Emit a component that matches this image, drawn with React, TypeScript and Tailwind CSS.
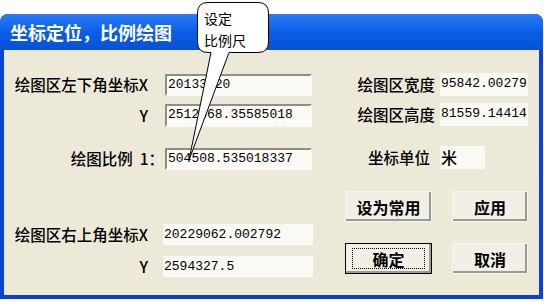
const cjk = { fontFamily: '"Noto Sans CJK SC", "Noto Sans", sans-serif' };
const mono = { fontFamily: '"Liberation Mono", "Noto Sans CJK SC", monospace' };

function Input({ value }: { value: string }) {
  return (
    <div
      className="h-full w-[147px] border-2 border-t-[#8f8d86] border-l-[#8f8d86] border-b-[#fbfaf5] border-r-[#fbfaf5] bg-[#fbfaf6] pl-[1px] text-[13px] leading-[18px] text-black"
      style={mono}
    >
      {value}
    </div>
  );
}

function Field({ value, w }: { value: string; w: string }) {
  return (
    <div className={`h-full ${w} bg-[#faf9f4] pl-[1px] text-[13px] leading-[22px] text-black`} style={mono}>
      {value}
    </div>
  );
}

function Button({ label, wide, focus }: { label: string; wide?: boolean; focus?: boolean }) {
  return (
    <div
      className={`flex h-[31px] items-center justify-center ${wide ? "w-[87px]" : "w-[76px]"} ${
        focus ? "border border-black" : "border border-[#f6f5f0]"
      } bg-[#f1efe6] shadow-[inset_-2px_-2px_0_#9d9a8e]`}
    >
      <div
        className={`flex h-[21px] items-center justify-center px-2 text-[16px] font-semibold text-black ${
          focus ? "w-[73px] border border-dotted border-black" : ""
        }`}
        style={cjk}
      >
        {label}
      </div>
    </div>
  );
}

export default function App() {
  return (
    <div className="relative h-[302px] w-[544px] overflow-hidden bg-white">
      <div className="absolute left-0 top-[14px] flex h-[285px] w-[543px] flex-col rounded-t-[8px] bg-[#0842d6]">
        <div
          className="flex h-[36px] items-center rounded-t-[8px] bg-gradient-to-b from-[#2a7cf8] via-[#0a5ee6] to-[#0651d8] pl-[10px] text-[18px] font-bold text-white"
          style={cjk}
        >
          坐标定位，比例绘图
        </div>
        <div className="mx-[4px] mb-[4px] flex flex-1 bg-[#ece9d8]">
          {/* left column */}
          <div className="flex w-[326px] flex-col pt-[24px] text-[15.5px] font-medium text-black" style={cjk}>
            <div className="flex h-[22px] items-center">
              <div className="w-[146px] pr-[2px] text-right whitespace-nowrap">绘图区左下角坐标X</div>
              <div className="ml-[15px] h-full">
                <Input value="20133420" />
              </div>
            </div>
            <div className="mt-[8px] flex h-[23px] items-center">
              <div className="w-[146px] pr-[2px] text-right">Y</div>
              <div className="ml-[15px] h-full">
                <Input value="2512468.35585018" />
              </div>
            </div>
            <div className="mt-[21px] flex h-[22px] items-center">
              <div className="w-[160px] text-right whitespace-nowrap">绘图比例&nbsp;&nbsp;1：</div>
              <div className="ml-[1px] h-full">
                <Input value="504508.535018337" />
              </div>
            </div>
            <div className="mt-[54px] flex h-[21px] items-center">
              <div className="w-[146px] pr-[2px] text-right whitespace-nowrap">绘图区右上角坐标X</div>
              <div className="ml-[13px] h-full">
                <Field value="20229062.002792" w="w-[150px]" />
              </div>
            </div>
            <div className="mt-[11px] flex h-[21px] items-center">
              <div className="w-[146px] pr-[2px] text-right">Y</div>
              <div className="ml-[13px] h-full">
                <Field value="2594327.5" w="w-[150px]" />
              </div>
            </div>
          </div>
          {/* right column */}
          <div className="flex flex-col pt-[23px] text-[15.5px] font-medium text-black" style={cjk}>
            <div className="flex h-[23px] items-center">
              <div className="w-[106px] pr-[1px] text-right whitespace-nowrap">绘图区宽度</div>
              <div className="ml-[4px] h-full">
                <Field value="95842.00279" w="w-[88px]" />
              </div>
            </div>
            <div className="mt-[7px] flex h-[23px] items-center">
              <div className="w-[106px] pr-[1px] text-right whitespace-nowrap">绘图区高度</div>
              <div className="ml-[4px] h-full">
                <Field value="81559.14414" w="w-[88px]" />
              </div>
            </div>
            <div className="mt-[20px] flex h-[23px] items-center">
              <div className="w-[100px] text-right whitespace-nowrap">坐标单位</div>
              <div className="ml-[10px] h-full">
                <div className="h-full w-[45px] bg-[#faf9f4] pl-[1px] text-[16px] leading-[23px]">米</div>
              </div>
            </div>
            <div className="ml-[15px] mt-[22px] flex gap-[20px]">
              <Button label="设为常用" wide />
              <Button label="应用" />
            </div>
            <div className="ml-[15px] mt-[21px] flex gap-[20px]">
              <Button label="确定" wide focus />
              <Button label="取消" />
            </div>
          </div>
        </div>
      </div>

      {/* callout */}
      <svg className="absolute left-0 top-0" width="544" height="302" viewBox="0 0 544 302">
        <path
          d="M 208 2.5 L 258 2.5 Q 268.5 2.5 268.5 13 L 268.5 42 Q 268.5 52.5 258 52.5 L 229 52.5 L 189 160 L 211 52.5 L 208 52.5 Q 197.5 52.5 197.5 42 L 197.5 13 Q 197.5 2.5 208 2.5 Z"
          fill="#ffffff"
          stroke="#000000"
          strokeWidth="1"
        />
      </svg>
      <div
        className="absolute left-[204px] top-[7px] text-[14px] leading-[22px] text-black"
        style={cjk}
      >
        <div>设定</div>
        <div>比例尺</div>
      </div>
    </div>
  );
}
